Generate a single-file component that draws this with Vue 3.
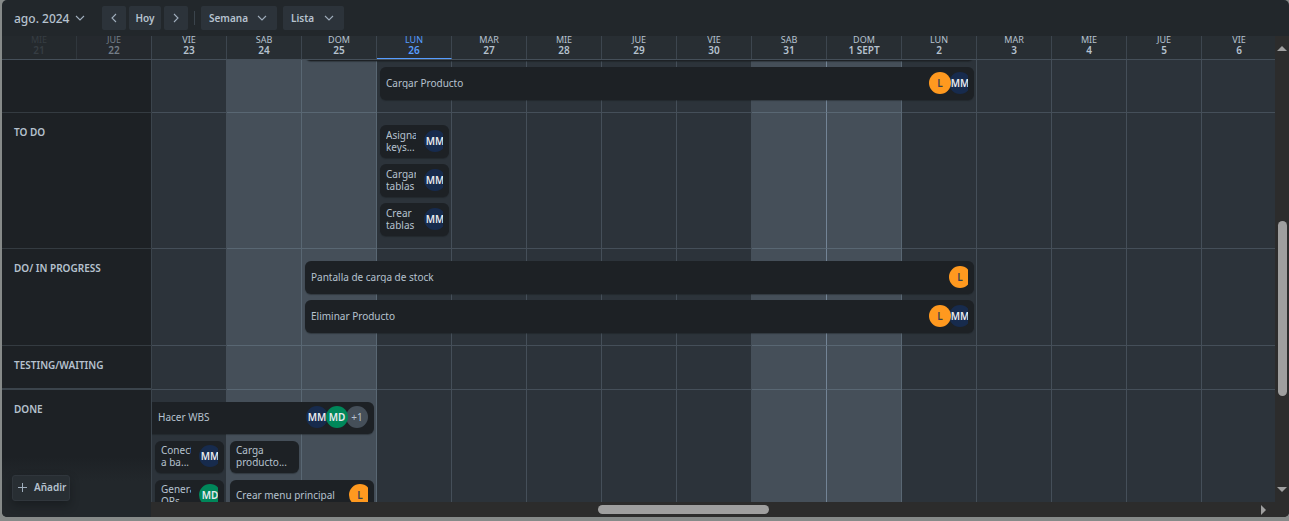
<script setup>
import { ref } from 'vue'

const view = ref('Semana')
const grouping = ref('Lista')

const names = ['DOM', 'LUN', 'MAR', 'MIE', 'JUE', 'VIE', 'SÁB']
const days = Array.from({ length: 30 }, (_, i) => {
  const date = new Date(2024, 7, 21 + i)
  const weekday = date.getDay()
  const number = date.getDate()
  return {
    name: names[weekday],
    number: number === 1 ? '1 SEPT' : String(number),
    weekend: weekday === 0 || weekday === 6,
    monthEnd: number === 31,
    beforeToday: i === 4,
    today: i === 5,
  }
})
const trackDays = days.slice(2)

const L = { text: 'L', kind: 'orange' }
const MM = { text: 'MM', kind: 'navy' }
const MD = { text: 'MD', kind: 'green' }

// Start and span count the day columns from Friday 23.
const lanes = [
  { label: '', kind: 'first', cards: [
    { title: '', start: 3, span: 9, row: 1, people: [] },
    { title: 'Cargar Producto', start: 4, span: 8, row: 2, people: [L, MM] },
  ] },
  { label: 'TO DO', cards: [
    { title: 'Asignar', second: 'keys...', start: 4, span: 1, row: 1, people: [MM] },
    { title: 'Cargar', second: 'tablas', start: 4, span: 1, row: 2, people: [MM] },
    { title: 'Crear', second: 'tablas', start: 4, span: 1, row: 3, people: [MM] },
  ] },
  { label: 'DO/ IN PROGRESS', cards: [
    { title: 'Pantalla de carga de stock', start: 3, span: 9, row: 1, people: [L] },
    { title: 'Eliminar Producto', start: 3, span: 9, row: 2, people: [L, MM] },
  ] },
  { label: 'TESTING/WAITING', kind: 'empty', cards: [] },
  { label: 'DONE', kind: 'last', cards: [
    { title: 'Hacer WBS', start: 1, span: 3, row: 1, continued: true, people: [MM, MD, { text: '+1', kind: 'more' }] },
    { title: 'Conectar', second: 'a ba...', start: 1, span: 1, row: 2, people: [MM] },
    { title: 'Carga', second: 'producto...', start: 2, span: 1, row: 2, people: [] },
    { title: 'Generar', second: 'QRs', start: 1, span: 1, row: 3, people: [MD] },
    { title: 'Crear menu principal', start: 2, span: 2, row: 3, people: [L] },
  ] },
]
</script>

<template>
  <main class="page">
    <section class="board">
      <header class="toolbar">
        <button class="month" type="button">
          ago. 2024
          <svg class="chevron" viewBox="0 0 10 10"><path d="M1 3l4 4 4-4" /></svg>
        </button>
        <div class="nav">
          <button class="tool arrow" type="button" aria-label="Anterior">
            <svg class="chevron" viewBox="0 0 10 10"><path d="M7 1L3 5l4 4" /></svg>
          </button>
          <button class="tool now" type="button">Hoy</button>
          <button class="tool arrow" type="button" aria-label="Siguiente">
            <svg class="chevron" viewBox="0 0 10 10"><path d="M3 1l4 4-4 4" /></svg>
          </button>
        </div>
        <span class="divider"></span>
        <label class="picker week">
          <select v-model="view" class="tool" aria-label="Vista"><option>Semana</option></select>
          <svg class="chevron" viewBox="0 0 10 10"><path d="M1 3l4 4 4-4" /></svg>
        </label>
        <label class="picker list">
          <select v-model="grouping" class="tool" aria-label="Agrupar"><option>Lista</option></select>
          <svg class="chevron" viewBox="0 0 10 10"><path d="M1 3l4 4 4-4" /></svg>
        </label>
      </header>

      <div class="body">
        <div class="timeline">
          <div class="days">
            <div v-for="(day, i) in days" :key="i" class="day" :class="{ today: day.today }">
              <span class="name">{{ day.name }}</span>
              <span class="number">{{ day.number }}</span>
            </div>
          </div>

          <div class="lanes">
            <div v-for="(lane, i) in lanes" :key="i" class="lane" :class="lane.kind">
              <h2 class="label">{{ lane.label }}</h2>
              <div class="track">
                <div class="columns">
                  <span
                    v-for="(day, d) in trackDays"
                    :key="d"
                    class="column"
                    :class="{ weekend: day.weekend, strong: day.monthEnd }"
                  ></span>
                </div>
                <div class="cards">
                  <article
                    v-for="(card, c) in lane.cards"
                    :key="c"
                    class="card"
                    :class="{ continued: card.continued }"
                    :style="{ gridColumn: `${card.start} / span ${card.span}`, gridRow: card.row }"
                  >
                    <p class="title">
                      <span>{{ card.title }}</span>
                      <span v-if="card.second">{{ card.second }}</span>
                    </p>
                    <div v-if="card.people.length" class="people" :class="{ full: card.people.length > 2 }">
                      <span v-for="(p, n) in card.people" :key="n" class="avatar" :class="p.kind">{{ p.text }}</span>
                    </div>
                  </article>
                </div>
              </div>
            </div>
          </div>

          <div class="hscroll">
            <span class="lead"></span>
            <span class="thumb"></span>
            <span class="rest"></span>
            <svg class="tip" viewBox="0 0 10 10"><path d="M3 0l5 5-5 5z" /></svg>
          </div>

          <div class="add-area">
            <button class="add" type="button">
              <svg viewBox="0 0 9 9"><path d="M4.5 0v9M0 4.5h9" /></svg>
              Añadir
            </button>
          </div>
        </div>

        <div class="vscroll">
          <svg class="tip" viewBox="0 0 10 10"><path d="M0 8l5-5 5 5z" /></svg>
          <span class="lead"></span>
          <span class="thumb"></span>
          <span class="rest"></span>
          <svg class="tip" viewBox="0 0 10 10"><path d="M0 3l5 5 5-5z" /></svg>
        </div>
      </div>
    </section>
  </main>
</template>

<style>
body {
  margin: 0;
  background: #868a89;
}
</style>

<style scoped>
.page {
  box-sizing: border-box;
  height: 100vh;
  padding: 0 0 4px 2px;
  background: #868a89;
  font-family: "Noto Sans", "Open Sans", sans-serif;
  font-size: 10px;
  color: #b6c2cf;
}
.page * {
  box-sizing: border-box;
}
.board {
  display: flex;
  flex-direction: column;
  height: 100%;
  border-radius: 5px;
  overflow: hidden;
  background: #22272b;
}
button,
select {
  font: inherit;
  font-weight: 600;
  color: inherit;
  border: 0;
  margin: 0;
  cursor: pointer;
}
.toolbar {
  flex: none;
  display: flex;
  align-items: center;
  height: 36px;
  padding-left: 12px;
}
.month {
  display: flex;
  align-items: center;
  justify-content: space-between;
  width: 71px;
  margin-right: 17px;
  padding: 0;
  background: none;
  font-size: 12px;
  font-weight: 500;
  white-space: nowrap;
}
.chevron {
  flex: none;
  width: 10px;
  height: 10px;
  fill: none;
  stroke: #9fadbc;
  stroke-width: 1.1;
}
.nav {
  display: flex;
  gap: 3px;
}
.tool {
  height: 24px;
  padding: 0;
  border-radius: 2px;
  background: #2c333a;
}
.arrow {
  display: flex;
  align-items: center;
  justify-content: center;
  width: 24px;
}
.now {
  width: 32px;
}
.divider {
  width: 1px;
  height: 14px;
  margin: 0 6px;
  background: #3b444c;
}
.picker {
  display: grid;
  align-items: center;
  margin-right: 6px;
}
.picker > * {
  grid-area: 1 / 1;
}
.picker .chevron {
  justify-self: end;
  margin-right: 10px;
  pointer-events: none;
}
.picker select {
  appearance: none;
  width: 100%;
  padding-left: 8px;
}
.week {
  width: 76px;
}
.list {
  width: 61px;
}
.body {
  flex: 1;
  display: flex;
  min-height: 0;
}
.timeline {
  position: relative;
  flex: 1;
  display: flex;
  flex-direction: column;
  min-width: 0;
  overflow: hidden;
}
.days {
  flex: none;
  display: flex;
  height: 24px;
  border-bottom: 1px solid #454f59;
  background: #282e33;
  overflow: hidden;
}
.day {
  flex: none;
  display: flex;
  flex-direction: column;
  justify-content: flex-end;
  width: 75px;
  padding-bottom: 4px;
  border-right: 1px solid #3d464f;
  text-align: center;
  line-height: 10px;
}
.name {
  font-size: 9px;
}
.number {
  font-size: 10px;
  font-weight: 600;
}
.day:nth-child(1) {
  color: #363d43;
  background: #24292d;
  border-color: #30373d;
}
.day:nth-child(2) {
  color: #747d87;
  background: #25292e;
}
.today {
  padding-bottom: 3px;
  border-bottom: 1px solid #579dff;
  color: #579dff;
}
.lanes {
  flex: 1;
  display: flex;
  flex-direction: column;
  min-height: 0;
  overflow: hidden;
}
.lane {
  flex: none;
  display: flex;
}
.first {
  margin-top: -44px;
}
.last {
  flex: 1 0 auto;
}
.label {
  flex: none;
  width: 150px;
  margin: 0;
  padding: 12px 12px 0;
  border-right: 1px solid #3b444c;
  border-bottom: 1px solid #343b41;
  background: #1d2125;
  font-size: 10px;
  line-height: 14px;
  font-weight: 600;
}
.empty .label {
  border-bottom: 2px solid #3b444c;
}
.track {
  flex: 1;
  display: grid;
  min-width: 0;
  overflow: hidden;
  background: #2c333a;
}
.columns,
.cards {
  grid-area: 1 / 1;
  display: grid;
  grid-template-columns: repeat(28, 75px);
}
.column {
  border: solid #454f59;
  border-width: 0 1px 1px 0;
}
.weekend {
  background: #454f59;
  border-color: #596773;
}
.strong {
  border-right-color: #738496;
}
.cards {
  grid-auto-rows: 33px;
  row-gap: 6px;
  min-height: 44px;
  padding: 12px 0 13px;
}
.last .cards {
  grid-auto-rows: 32px;
  row-gap: 7px;
}
.card {
  display: flex;
  align-items: center;
  gap: 8px;
  min-width: 0;
  margin: 0 3px;
  padding: 0 6px 2px;
  border-radius: 6px;
  background: #1d2125;
  box-shadow: 0 1px 1px #15191c66;
}
.continued {
  margin-left: 0;
  border-radius: 0 6px 6px 0;
}
.title {
  flex: 1;
  min-width: 0;
  margin: 0;
  overflow: hidden;
  white-space: nowrap;
  line-height: 12px;
}
.title span {
  display: block;
}
.people {
  flex: none;
  display: flex;
  overflow: hidden;
}
.avatar {
  flex: none;
  position: relative;
  width: 22px;
  height: 22px;
  margin-right: -2px;
  border-radius: 50%;
  font-size: 10px;
  line-height: 22px;
  font-weight: 600;
  text-align: center;
}
.avatar:last-child {
  margin-right: -3px;
}
.full .avatar:last-child {
  margin-right: 0;
}
.orange {
  z-index: 1;
  background: #ff991f;
  color: #3b3f4d;
}
.navy {
  background: #172b4d;
  color: #e6e9ee;
}
.green {
  z-index: 1;
  background: #00875a;
  color: #e6e9ee;
}
.more {
  background: #454f59;
  font-weight: 400;
}
.hscroll {
  flex: none;
  display: flex;
  align-items: center;
  height: 15px;
  margin-left: 149px;
  background: #2c2c2c;
}
.thumb {
  border-radius: 5px;
  background: #9f9f9f;
}
.hscroll .lead {
  flex: 447;
}
.hscroll .thumb {
  flex: 171;
  height: 9px;
}
.hscroll .rest {
  flex: 489;
}
.tip {
  flex: none;
  width: 10px;
  height: 10px;
  fill: #9f9f9f;
}
.hscroll .tip {
  margin-right: 7px;
}
.vscroll {
  flex: none;
  display: flex;
  flex-direction: column;
  align-items: center;
  width: 14px;
  padding: 7px 0 23px;
  background: #2c2c2c;
}
.vscroll .lead {
  flex: 168;
}
.vscroll .thumb {
  flex: 175;
  width: 9px;
}
.vscroll .rest {
  flex: 88;
}
.add-area {
  position: absolute;
  left: 0;
  bottom: 0;
  width: 149px;
  height: 60px;
  padding: 18px 10px 0;
  background: linear-gradient(#1d2125, #22272b 24px);
}
.add {
  display: flex;
  align-items: center;
  gap: 7px;
  width: 58px;
  height: 26px;
  padding: 0 0 2px 5px;
  border: 1px solid #30363c;
  border-radius: 3px;
  background: #282e33;
  box-shadow: 0 4px 8px #0c0f1166;
  white-space: nowrap;
}
.add svg {
  flex: none;
  width: 9px;
  height: 9px;
  fill: none;
  stroke: #9fadbc;
}
</style>
